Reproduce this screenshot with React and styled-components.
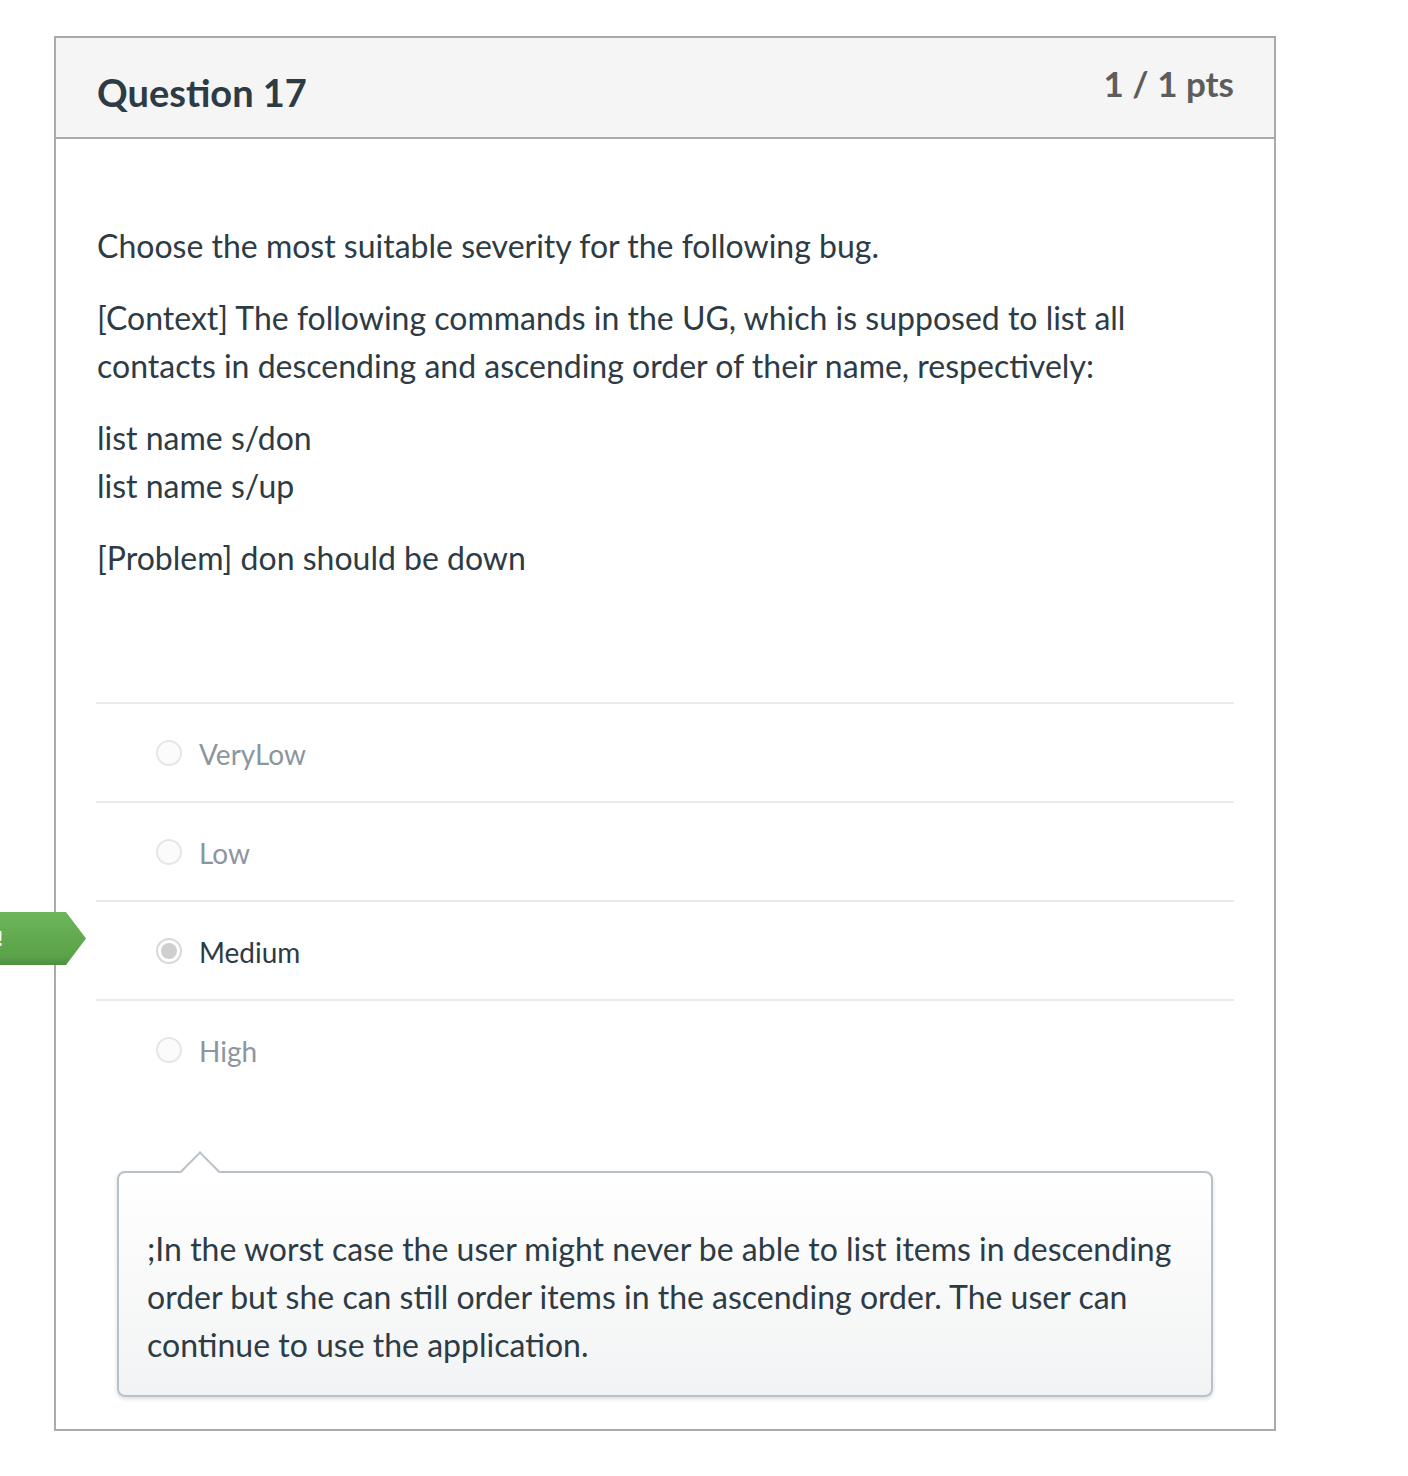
import React from "react";
import styled, { createGlobalStyle } from "styled-components";

const Global = createGlobalStyle`
  html, body { margin: 0; padding: 0; background: #fff; }
  body { font-family: Lato, "Noto Sans", sans-serif; color: #2d3b45; }
`;

const Page = styled.div`
  position: relative;
  padding: 36px 0 40px 54px;
  width: 1408px;
  box-sizing: border-box;
`;

const Card = styled.div`
  width: 1222px;
  box-sizing: border-box;
  border: 2px solid #aaaaaa;
  background: #fff;
`;

const Header = styled.div`
  height: 101px;
  box-sizing: border-box;
  background: #f5f5f5;
  border-bottom: 2px solid #aaaaaa;
  display: flex;
  justify-content: space-between;
  align-items: flex-start;
  padding: 0 40px 0 41px;
`;

const Title = styled.h2`
  margin: 32px 0 0;
  font-size: 38px;
  font-weight: 700;
  line-height: 44px;
  color: #2d3b45;
`;

const Points = styled.div`
  margin-top: 25px;
  font-size: 35px;
  font-weight: 700;
  line-height: 40px;
  color: #5d5d5d;
`;

const Body = styled.div`
  padding: 83px 40px 32px 40px;
`;

const Text = styled.div`
  font-size: 32px;
  line-height: 48px;
  color: #2d3b45;
  padding-left: 1px;
`;

const Para = styled.p`
  margin: 0 0 24px;
`;

const Answers = styled.div`
  margin-top: 120px;
`;

const Row = styled.div`
  position: relative;
  height: 99px;
  box-sizing: border-box;
  border-top: 2px solid #e8eaec;
  display: flex;
  align-items: center;
  padding-left: 60px;
  gap: 17px;
`;

const Radio = styled.span`
  width: 26px;
  height: 26px;
  box-sizing: border-box;
  border-radius: 50%;
  border: 2px solid #e6e6e6;
  background: #fbfbfb;
  display: flex;
  align-items: center;
  justify-content: center;
  flex: none;
  &::after {
    content: "";
    display: ${(p) => (p.$checked ? "block" : "none")};
    width: 16px;
    height: 16px;
    border-radius: 50%;
    background: #cfcfcf;
  }
  ${(p) => p.$checked && `border-color: #d8d8d8; background: #fff;`}
`;

const Label = styled.span`
  font-size: 28px;
  line-height: 40px;
  color: ${(p) => (p.$selected ? "#2d3b45" : "#8b969e")};
  margin-top: 2px;
`;

const Arrow = styled.div`
  position: absolute;
  left: -96px;
  top: 10px;
  width: 86px;
  height: 53px;
  background: linear-gradient(#6db65b, #5aa148 85%, #4f8f3f);
  clip-path: polygon(0 0, 66px 0, 86px 50%, 66px 100%, 0 100%);
  color: #fff;
  font-size: 20px;
  font-weight: 700;
  line-height: 53px;
`;

const ArrowText = styled.span`
  position: absolute;
  right: 83px;
  top: 0;
  white-space: nowrap;
`;

const CommentWrap = styled.div`
  margin: 73px 21px 0;
  position: relative;
`;

const Comment = styled.div`
  position: relative;
  border: 2px solid #b8c1ca;
  border-radius: 8px;
  background: linear-gradient(#ffffff, #f2f3f4);
  box-shadow: 0 2px 4px rgba(0, 0, 0, 0.14);
  padding: 52px 28px 26px;
  font-size: 32px;
  line-height: 48px;
  color: #2d3b45;
  &::before {
    content: "";
    position: absolute;
    left: 67px;
    top: -16px;
    width: 26px;
    height: 26px;
    background: #fff;
    border-left: 2px solid #b8c1ca;
    border-top: 2px solid #b8c1ca;
    transform: rotate(45deg);
  }
`;

const answers = [
  { label: "VeryLow" },
  { label: "Low" },
  { label: "Medium", selected: true },
  { label: "High" },
];

export default function App() {
  return (
    <Page>
      <Global />
      <Card>
        <Header>
          <Title>Question 17</Title>
          <Points>1 / 1 pts</Points>
        </Header>
        <Body>
          <Text>
            <Para>Choose the most suitable severity for the following bug.</Para>
            <Para>
              [Context] The following commands in the UG, which is supposed to list all
              contacts in descending and ascending order of their name, respectively:
            </Para>
            <Para>
              list name s/don
              <br />
              list name s/up
            </Para>
            <Para>[Problem] don should be down</Para>
          </Text>
          <Answers>
            {answers.map((a) => (
              <Row key={a.label}>
                {a.selected && (
                  <Arrow>
                    <ArrowText>Correct!</ArrowText>
                  </Arrow>
                )}
                <Radio $checked={a.selected} />
                <Label $selected={a.selected}>{a.label}</Label>
              </Row>
            ))}
          </Answers>
          <CommentWrap>
            <Comment>
              ;In the worst case the user might never be able to list items in descending
              order but she can still order items in the ascending order. The user can
              continue to use the application.
            </Comment>
          </CommentWrap>
        </Body>
      </Card>
    </Page>
  );
}
